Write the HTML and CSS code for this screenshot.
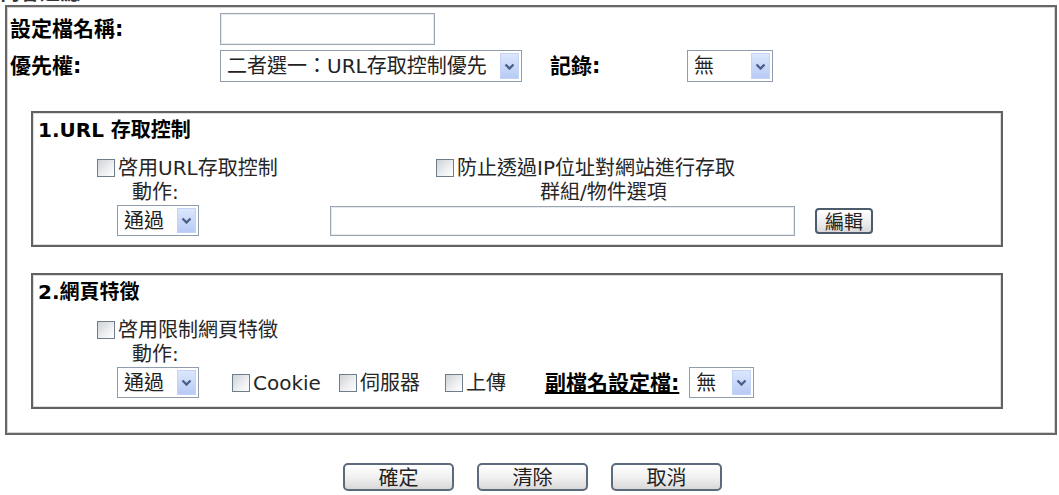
FILE: index.html
```html
<!DOCTYPE html>
<html lang="zh-Hant">
<head>
<meta charset="utf-8">
<title>設定檔</title>
<link rel="stylesheet" href="styles.css">
</head>
<body>
<div class="clip"><span>內容過濾</span></div>
<div class="outer">
  <div class="row r1">
    <span class="lbl first">設定檔名稱:</span>
    <input class="txt name" type="text">
  </div>
  <div class="row r2">
    <span class="lbl first">優先權:</span>
    <span class="sel prio"><select><option>二者選一：URL存取控制優先</option></select><span class="arr"><svg width="11" height="7" viewBox="0 0 11 7"><path d="M1.5 1.5 L5.5 5.5 L9.5 1.5" fill="none" stroke="#4b5f8a" stroke-width="2.4"/></svg></span></span>
    <span class="lbl log">記錄:</span>
    <span class="sel logsel"><select><option>無</option></select><span class="arr"><svg width="11" height="7" viewBox="0 0 11 7"><path d="M1.5 1.5 L5.5 5.5 L9.5 1.5" fill="none" stroke="#4b5f8a" stroke-width="2.4"/></svg></span></span>
  </div>

  <div class="box">
    <div class="title">1.URL 存取控制</div>
    <div class="crow">
      <label class="chk c1"><input type="checkbox">啓用URL存取控制</label>
      <label class="chk"><input type="checkbox">防止透過IP位址對網站進行存取</label>
    </div>
    <div class="arow"><span class="act">動作:</span><span class="grplbl">群組/物件選項</span></div>
    <div class="srow">
      <span class="sel actsel"><select><option>通過</option></select><span class="arr"><svg width="11" height="7" viewBox="0 0 11 7"><path d="M1.5 1.5 L5.5 5.5 L9.5 1.5" fill="none" stroke="#4b5f8a" stroke-width="2.4"/></svg></span></span>
      <input class="txt grp" type="text">
      <button class="edit" type="button">編輯</button>
    </div>
  </div>

  <div class="box box2">
    <div class="title">2.網頁特徵</div>
    <div class="crow">
      <label class="chk c1"><input type="checkbox">啓用限制網頁特徵</label>
    </div>
    <div class="arow"><span class="act">動作:</span></div>
    <div class="srow">
      <span class="sel actsel"><select><option>通過</option></select><span class="arr"><svg width="11" height="7" viewBox="0 0 11 7"><path d="M1.5 1.5 L5.5 5.5 L9.5 1.5" fill="none" stroke="#4b5f8a" stroke-width="2.4"/></svg></span></span>
      <label class="chk k-cookie"><input type="checkbox">Cookie</label>
      <label class="chk k-server"><input type="checkbox">伺服器</label>
      <label class="chk k-upload"><input type="checkbox">上傳</label>
      <span class="lbl ext">副檔名設定檔:</span>
      <span class="sel extsel"><select><option>無</option></select><span class="arr"><svg width="11" height="7" viewBox="0 0 11 7"><path d="M1.5 1.5 L5.5 5.5 L9.5 1.5" fill="none" stroke="#4b5f8a" stroke-width="2.4"/></svg></span></span>
    </div>
  </div>
</div>
<div class="btns">
  <button class="btn" type="button">確定</button>
  <button class="btn" type="button">清除</button>
  <button class="btn" type="button">取消</button>
</div>
</body>
</html>
```
FILE: styles.css
```css
* { box-sizing: border-box; }
body {
  margin: 0;
  width: 1059px;
  font-family: "DejaVu Sans", "Noto Sans CJK TC", sans-serif;
  font-size: 20px;
  line-height: 24px;
  color: #262626;
  background: #fff;
}
.clip { height: 5px; overflow: hidden; }
.clip span {
  display: block;
  margin-top: -17px;
  font-weight: bold;
  font-size: 20px;
  line-height: 20px;
  color: #333;
}
.outer {
  margin: 0 2px 0 5px;
  border: 2px solid #666;
  box-shadow: inset 0 0 0 1px #d4d4d4;
  padding: 6px 0 24px 3px;
}
.row { display: flex; align-items: center; }
.lbl { font-weight: bold; font-size: 21px; color: #000; }
.first { width: 210px; }
.r2 { margin-top: 5px; }
.log { margin-left: 28px; width: 137px; }

.txt {
  border: 1px solid #9aa6b2;
  box-shadow: inset 0 0 0 1px #e6eaef;
  background: #fff;
  font: inherit;
  padding: 0 4px;
  outline: none;
}
.name { width: 215px; height: 32px; }

.sel {
  display: inline-flex;
  align-items: stretch;
  flex: none;
  border: 1px solid #8f9cab;
  background: #fff;
  padding: 2px;
  height: 32px;
}
.sel select {
  appearance: none;
  -webkit-appearance: none;
  border: none;
  background: transparent;
  font: inherit;
  font-size: 20px;
  color: #222;
  padding: 0 0 0 4px;
  flex: 1;
  min-width: 0;
  outline: none;
}
.arr {
  width: 19px;
  background: linear-gradient(#dce7fd, #b8cbf6);
  border: 1px solid #c3d3f3;
  display: flex;
  align-items: center;
  justify-content: center;
}
.prio { width: 302px; }
.logsel { width: 86px; }
.actsel { width: 82px; height: 31px; }
.extsel { width: 65px; height: 31px; }

.box {
  border: 2px solid #626262;
  box-shadow: inset 0 0 0 1px #dedede;
  margin: 29px 52px 0 21px;
  padding: 5px 0 9px 5px;
}
.box2 { margin-top: 26px; }
.title { font-weight: bold; color: #000; }
.crow { display: flex; margin-top: 14px; padding-left: 59px; }
.c1 { width: 339px; }
.chk { display: inline-flex; align-items: center; flex: none; }
.chk input {
  appearance: none;
  -webkit-appearance: none;
  display: block;
  flex: none;
  width: 18px;
  height: 18px;
  min-width: 18px;
  margin: 0 3px 0 0;
  border: 1px solid #6f7c8a;
  background: linear-gradient(135deg, #cfd3d7, #eef0f2 60%, #ffffff);
}
.arow { display: flex; padding-left: 94px; }
.act { width: 408px; }
.srow { display: flex; align-items: center; margin-top: 1px; padding-left: 79px; }
.grp { width: 465px; height: 30px; margin-left: 131px; }
.edit {
  margin-left: 20px;
  width: 58px;
  height: 26px;
  border: 2px solid #4c5c6c;
  border-radius: 4px;
  background: linear-gradient(#ffffff, #ececec 60%, #d9d9d9);
  font-family: "Noto Sans CJK TC", sans-serif;
  font-size: 19px;
  line-height: 1;
  color: #222;
  padding: 0;
}
.k-cookie { margin-left: 33px; }
.k-server { margin-left: 18px; }
.k-upload { margin-left: 25px; }
.ext { margin-left: 39px; text-decoration: underline; margin-right: 10px; }

.btns {
  display: flex;
  justify-content: center;
  gap: 23px;
  margin-top: 28px;
  padding-left: 6px;
}
.btn {
  width: 111px;
  height: 28px;
  border: 2px solid #5b6b7b;
  border-radius: 5px;
  background: linear-gradient(#ffffff, #efefef 55%, #d8d8d8);
  font-family: "Noto Sans CJK TC", sans-serif;
  font-size: 20px;
  line-height: 1;
  color: #222;
  padding: 0;
}
```
